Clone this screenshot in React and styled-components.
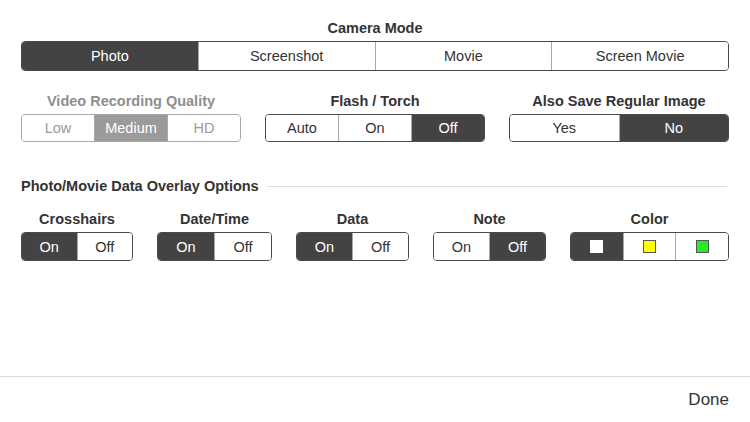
import styled, { createGlobalStyle } from "styled-components";

const Global = createGlobalStyle`
  html, body {
    margin: 0;
    padding: 0;
    background: #fff;
    font-family: "Liberation Sans", Arial, sans-serif;
  }
`;

const Page = styled.div`
  width: 750px;
  height: 422px;
  display: flex;
  flex-direction: column;
  background: #fff;
  overflow: hidden;
`;

const Content = styled.div`
  flex: 1;
  padding: 19px 21px 0 21px;
  display: flex;
  flex-direction: column;
`;

const Group = styled.div`
  display: flex;
  flex-direction: column;
  align-items: stretch;
  gap: 4px;
  min-width: 0;
`;

const Title = styled.div`
  text-align: center;
  font-size: 14.5px;
  font-weight: 700;
  line-height: 18px;
  color: ${({ $disabled }) => ($disabled ? "#8e8e8e" : "#333")};
  white-space: nowrap;
`;

const Row = styled.div`
  display: grid;
  grid-template-columns: ${({ $cols }) => $cols};
  gap: 24px;
  margin-top: ${({ $top }) => $top}px;
`;

const Segmented = styled.div`
  display: flex;
  height: ${({ $h }) => $h || 28}px;
  border: 1px solid ${({ $disabled }) => ($disabled ? "#a8a8a8" : "#4a4a4a")};
  border-radius: 4px;
  overflow: hidden;
  box-sizing: border-box;
`;

const Segment = styled.div`
  flex: 1;
  display: flex;
  align-items: center;
  justify-content: center;
  font-size: 14.5px;
  color: ${({ $active, $disabled }) =>
    $active ? "#fff" : $disabled ? "#9a9a9a" : "#333"};
  background: ${({ $active, $disabled }) =>
    $active ? ($disabled ? "#9b9b9b" : "#434343") : "#fff"};
  & + & {
    border-left: 1px solid
      ${({ $disabled }) => ($disabled ? "#a8a8a8" : "#4a4a4a")};
  }
`;

const Section = styled.div`
  display: flex;
  align-items: center;
  gap: 8px;
  margin-top: 35px;
  padding-right: 2px;
`;

const SectionLabel = styled.div`
  font-size: 14.5px;
  font-weight: 700;
  color: #333;
  line-height: 18px;
  white-space: nowrap;
`;

const Rule = styled.div`
  flex: 1;
  height: 1px;
  background: #dcdcdc;
`;

const Swatch = styled.span`
  width: 11px;
  height: 11px;
  background: ${({ $color }) => $color};
  border: 1px solid ${({ $color }) => ($color === "#fff" ? "#fff" : "#555")};
`;

const Footer = styled.div`
  height: 45px;
  border-top: 1px solid #dcdcdc;
  display: flex;
  align-items: center;
  justify-content: flex-end;
  padding-right: 21px;
`;

const Done = styled.div`
  font-size: 17px;
  color: #333;
  margin-top: 1px;
`;

const Control = ({ title, options, active, disabled, h }) => (
  <Group>
    <Title $disabled={disabled}>{title}</Title>
    <Segmented $disabled={disabled} $h={h}>
      {options.map((o, i) => (
        <Segment key={i} $active={i === active} $disabled={disabled}>
          {o}
        </Segment>
      ))}
    </Segmented>
  </Group>
);

export default function App() {
  return (
    <Page>
      <Global />
      <Content>
        <Control
          title="Camera Mode"
          options={["Photo", "Screenshot", "Movie", "Screen Movie"]}
          active={0}
          h={30}
        />
        <Row $cols="1fr 1fr 1fr" $top={21}>
          <Control
            title="Video Recording Quality"
            options={["Low", "Medium", "HD"]}
            active={1}
            disabled
          />
          <Control title="Flash / Torch" options={["Auto", "On", "Off"]} active={2} />
          <Control title="Also Save Regular Image" options={["Yes", "No"]} active={1} />
        </Row>
        <Section>
          <SectionLabel>Photo/Movie Data Overlay Options</SectionLabel>
          <Rule />
        </Section>
        <Row $cols="112px 115px 113px 113px 1fr" $top={15}>
          <Control title="Crosshairs" options={["On", "Off"]} active={0} h={29} />
          <Control title="Date/Time" options={["On", "Off"]} active={0} h={29} />
          <Control title="Data" options={["On", "Off"]} active={0} h={29} />
          <Control title="Note" options={["On", "Off"]} active={1} h={29} />
          <Control
            title="Color"
            h={29}
            options={[
              <Swatch $color="#fff" />,
              <Swatch $color="#ffff00" />,
              <Swatch $color="#22ee22" />,
            ]}
            active={0}
          />
        </Row>
      </Content>
      <Footer>
        <Done>Done</Done>
      </Footer>
    </Page>
  );
}
